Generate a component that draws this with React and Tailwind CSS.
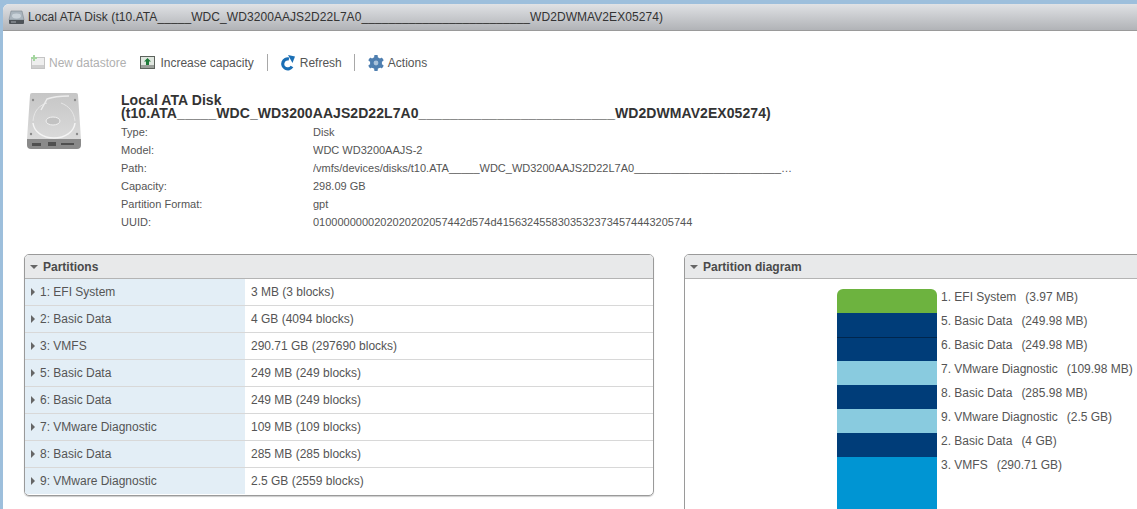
import { useId } from "react";

const DISK_NAME = "t10.ATA_____WDC_WD3200AAJS2D22L7A0_________________________WD2DWMAV2EX05274";

const details = [
  ["Type:", "Disk"],
  ["Model:", "WDC WD3200AAJS-2"],
  ["Path:", `/vmfs/devices/disks/${DISK_NAME}`],
  ["Capacity:", "298.09 GB"],
  ["Partition Format:", "gpt"],
  ["UUID:", "0100000000202020202057442d574d41563245583035323734574443205744"],
];

const partitions = [
  ["1: EFI System", "3 MB (3 blocks)"],
  ["2: Basic Data", "4 GB (4094 blocks)"],
  ["3: VMFS", "290.71 GB (297690 blocks)"],
  ["5: Basic Data", "249 MB (249 blocks)"],
  ["6: Basic Data", "249 MB (249 blocks)"],
  ["7: VMware Diagnostic", "109 MB (109 blocks)"],
  ["8: Basic Data", "285 MB (285 blocks)"],
  ["9: VMware Diagnostic", "2.5 GB (2559 blocks)"],
];

const segments = [
  { label: "1. EFI System", size: "(3.97 MB)", color: "bg-[#6db33f] rounded-t-md" },
  { label: "5. Basic Data", size: "(249.98 MB)", color: "bg-[#003d79]" },
  { label: "6. Basic Data", size: "(249.98 MB)", color: "bg-[#003d79] border-t border-[#00264d]" },
  { label: "7. VMware Diagnostic", size: "(109.98 MB)", color: "bg-[#89cbdf]" },
  { label: "8. Basic Data", size: "(285.98 MB)", color: "bg-[#003d79]" },
  { label: "9. VMware Diagnostic", size: "(2.5 GB)", color: "bg-[#89cbdf]" },
  { label: "2. Basic Data", size: "(4 GB)", color: "bg-[#003d79]" },
  { label: "3. VMFS", size: "(290.71 GB)", color: "bg-[#0095d3] h-[60px]" },
];

const DiskIcon = () => {
  const id = useId();
  return (
    <svg className="w-[54px] h-[56px]" viewBox="0 0 54 56" fill="none">
      <defs>
        <linearGradient id={id} x1="0" y1="0" x2="0" y2="1">
          <stop offset="0" stopColor="#c6c6c6" />
          <stop offset="1" stopColor="#dadada" />
        </linearGradient>
      </defs>
      <path d="M5 0h44q2 0 2 2l3 44H0L3 2q0-2 2-2z" fill={`url(#${id})`} />
      <path d="M0 46h54v6q0 4-4 4H4q-4 0-4-4z" fill="#8a8a8a" />
      <path d="M5 50h9v3H5zM21 49h8v4h-8zM34 50h13v2H34z" fill="#4f4f4f" />
      <path d="M6 30c1 9 10 15 21 15s20-6 21-15" stroke="#f4f4f4" strokeWidth="1.5" />
      <path d="M6 28C7 17 13 12 20 10M34 10c8 3 13 9 14 18" stroke="#e6e6e6" />
      <ellipse cx="26" cy="28" rx="7" ry="4" fill="#c2c2c2" stroke="#f0f0f0" />
      <path d="M14 17 L20 6 Q28 3 42 3" stroke="#ececec" strokeWidth="1.5" />
      <circle cx="6" cy="7" r="1.2" fill="#8c8c8c" />
      <circle cx="48" cy="7" r="1.2" fill="#8c8c8c" />
      <circle cx="4" cy="41" r="1.2" fill="#8c8c8c" />
      <circle cx="50" cy="41" r="1.2" fill="#8c8c8c" />
    </svg>
  );
};

const SmallDiskIcon = () => (
  <svg className="w-[17px] h-[15px]" viewBox="0 0 17 15" fill="none">
    <path d="M3 1h11l2 9H1z" fill="#a9b4bd" stroke="#7d868e" strokeWidth="0.6" />
    <ellipse cx="8.5" cy="6" rx="4.5" ry="2.4" fill="#c9d2d9" />
    <path d="M1 10h15v3q0 1-1 1H2q-1 0-1-1z" fill="#4e5358" />
    <path d="M3 11.5h5v1H3z" fill="#a4aaaf" />
  </svg>
);

const NewDatastoreIcon = () => (
  <svg className="w-[15px] h-[15px]" viewBox="0 0 15 15" fill="none">
    <rect x="1.5" y="2.5" width="13" height="11" fill="#eeeeee" stroke="#c4c4c4" />
    <rect x="2" y="10" width="12" height="3" fill="#cfcfcf" />
    <path d="M4 0v6M1 3h6" stroke="#a5d6a0" strokeWidth="2" />
  </svg>
);

const IncreaseIcon = () => (
  <svg className="w-[15px] h-[15px]" viewBox="0 0 15 15" fill="none">
    <rect x="0.5" y="1.5" width="14" height="12" fill="#dfe6df" stroke="#5c625c" />
    <rect x="1" y="10" width="13" height="3" fill="#9a9f9a" />
    <path d="M7.5 3 L11 6.5H9V10H6V6.5H4z" fill="#1f7a3a" />
  </svg>
);

const RefreshIcon = () => (
  <svg className="w-[15px] h-[16px]" viewBox="0 0 15 16" fill="none">
    <path d="M12 11.5A5 5 0 1 1 9 4" stroke="#1b6fb5" strokeWidth="3.2" />
    <path d="M8 0l7 1.5-2.5 6.5z" fill="#1b6fb5" />
  </svg>
);

const GearIcon = () => (
  <svg className="w-4 h-4" viewBox="0 0 16 16">
    <g fill="#4f7fb0">
      <circle cx="8" cy="8" r="6" />
      <rect x="6.2" y="0" width="3.6" height="16" rx="0.8" />
      <rect x="6.2" y="0" width="3.6" height="16" rx="0.8" transform="rotate(60 8 8)" />
      <rect x="6.2" y="0" width="3.6" height="16" rx="0.8" transform="rotate(120 8 8)" />
    </g>
    <circle cx="8" cy="8" r="2.4" fill="#a9c2da" />
  </svg>
);

const PanelHeader = ({ title }) => (
  <div className="h-6 flex items-center gap-[5px] pl-[5px] bg-[#e8e9ea] border-b border-[#b4b4b4] font-bold text-[12px] text-[#4a4a4a]">
    <span className="w-0 h-0 border-x-4 border-x-transparent border-t-[4px] border-t-[#666]" />
    {title}
  </div>
);

export default function App() {
  return (
    <div className="w-[1137px] h-[509px] overflow-hidden bg-[#9dbfdc] pt-1 pl-[3px] font-['Liberation_Sans',Arial,sans-serif]">
      <div className="h-full bg-white rounded-tl-md overflow-hidden">
        <div className="h-[27px] flex items-center gap-[3px] pl-[5px] bg-gradient-to-b from-[#e0e2e5] to-[#b1b3b7] border-b border-[#9a9a9a] text-[12px] tracking-[0.07px] text-[#333]">
          <SmallDiskIcon />
          <span className="whitespace-nowrap">Local ATA Disk ({DISK_NAME})</span>
        </div>

        <div className="flex items-center h-[17px] mt-[23px] ml-[27px] text-[12px] text-[#555]">
          <span className="flex items-center gap-[4px] text-[#b0b0b0]">
            <NewDatastoreIcon />
            New datastore
          </span>
          <span className="flex items-center gap-[5px] ml-[14px]">
            <IncreaseIcon />
            Increase capacity
          </span>
          <span className="w-px h-[17px] ml-[13px] mr-[12px] bg-[#a8a8a8]" />
          <span className="flex items-center gap-[5px]">
            <RefreshIcon />
            Refresh
          </span>
          <span className="w-px h-[17px] ml-[12px] mr-[13px] bg-[#a8a8a8]" />
          <span className="flex items-center gap-[4px]">
            <GearIcon />
            Actions
          </span>
        </div>

        <div className="flex mt-[22px] ml-[24px]">
          <DiskIcon />
          <div className="ml-[40px]">
            <h1 className="w-[660px] pt-[1px] font-bold text-[14px] leading-[13px] tracking-[0.07px] text-[#333] break-words">
              Local ATA Disk ({DISK_NAME})
            </h1>
            <div className="mt-[3px] text-[11px] text-[#555]">
              {details.map(([key, value]) => (
                <div key={key} className="flex h-[18px] items-center">
                  <span className="w-[192px]">{key}</span>
                  <span className="w-[485px] truncate">{value}</span>
                </div>
              ))}
            </div>
          </div>
        </div>

        <div className="flex gap-[30px] mt-[23px] ml-[21px] text-[12px] text-[#555]">
          <section className="w-[630px] shrink-0 h-[242px] border border-[#9a9a9a] rounded-[5px] overflow-hidden shadow-[0_1px_1px_rgba(0,0,0,0.2)]">
            <PanelHeader title="Partitions" />
            {partitions.map(([name, size]) => (
              <div key={name} className="flex h-[27px] border-b border-[#d8d8d8] last:border-b-transparent">
                <div className="w-[220px] flex items-center gap-[5px] pl-[6px] bg-[#e3eef6]">
                  <span className="w-0 h-0 border-y-4 border-y-transparent border-l-[4px] border-l-[#666]" />
                  {name}
                </div>
                <div className="flex items-center pl-[6px]">{size}</div>
              </div>
            ))}
          </section>

          <section className="w-[480px] shrink-0 h-[300px] border border-[#9a9a9a] rounded-[5px] overflow-hidden">
            <PanelHeader title="Partition diagram" />
            <div className="ml-[152px] mt-[10px]">
              {segments.map((s) => (
                <div key={s.label} className="flex">
                  <div className={`w-[100px] h-6 ${s.color}`} />
                  <div className="flex h-4 items-center pl-[4px] gap-[9px] whitespace-nowrap self-start">
                    <span>{s.label}</span>
                    <span>{s.size}</span>
                  </div>
                </div>
              ))}
            </div>
          </section>
        </div>
      </div>
    </div>
  );
}
